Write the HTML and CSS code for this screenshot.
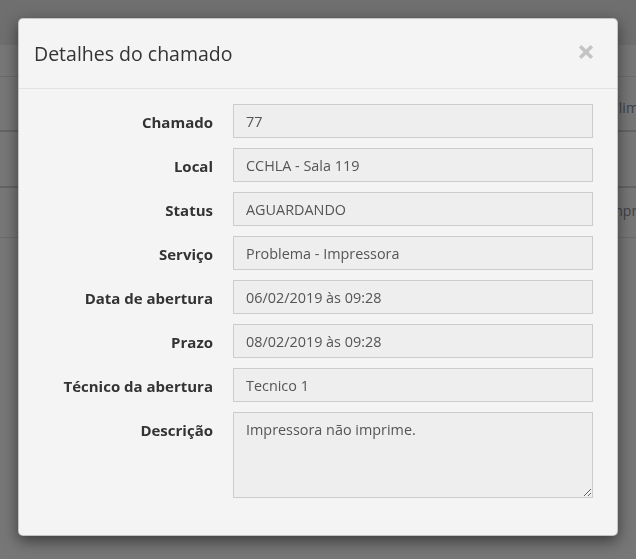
FILE: index.html
```html
<!DOCTYPE html>
<html lang="pt-BR">
<head>
<meta charset="utf-8">
<title>Detalhes do chamado</title>
<link rel="stylesheet" href="styles.css">
</head>
<body>
<div class="page">
  <div class="topbar"></div>
  <div class="row row-thin"><span></span><span></span></div>
  <div class="row row-a"><span></span><span class="cell">Climatização</span></div>
  <div class="row row-b"><span></span><span></span></div>
  <div class="row row-c"><span></span><span class="cell">Impressora</span></div>
</div>

<div class="modal" role="dialog">
  <div class="modal-header">
    <h4 class="modal-title">Detalhes do chamado</h4>
    <button class="close" type="button" aria-label="Fechar">
      <svg width="16" height="16" viewBox="0 0 16 16"><path d="M2.2 2.2 L13.8 13.8 M13.8 2.2 L2.2 13.8" stroke="#c4c4c4" stroke-width="3.6" stroke-linecap="butt" fill="none"/></svg>
    </button>
  </div>
  <div class="modal-body">
    <form class="form">
      <label class="lbl">Chamado</label>
      <input class="ctrl" type="text" value="77" readonly>
      <label class="lbl">Local</label>
      <input class="ctrl" type="text" value="CCHLA - Sala 119" readonly>
      <label class="lbl">Status</label>
      <input class="ctrl" type="text" value="AGUARDANDO" readonly>
      <label class="lbl">Serviço</label>
      <input class="ctrl" type="text" value="Problema - Impressora" readonly>
      <label class="lbl">Data de abertura</label>
      <input class="ctrl" type="text" value="06/02/2019 às 09:28" readonly>
      <label class="lbl">Prazo</label>
      <input class="ctrl" type="text" value="08/02/2019 às 09:28" readonly>
      <label class="lbl">Técnico da abertura</label>
      <input class="ctrl" type="text" value="Tecnico 1" readonly>
      <label class="lbl">Descrição</label>
      <textarea class="ctrl area" readonly>Impressora não imprime.</textarea>
    </form>
  </div>
</div>
</body>
</html>
```

FILE: styles.css
```css
* { box-sizing: border-box; }

html, body {
  margin: 0;
  padding: 0;
  height: 100%;
}

body {
  background: #777777;
  font-family: "Open Sans", "Liberation Sans", sans-serif;
  font-size: 14px;
  line-height: 20px;
  color: #333;
  overflow: hidden;
}

/* dimmed page behind the modal */
.page {
  display: flex;
  flex-direction: column;
}

.topbar {
  height: 45px;
  background: #6f6f6f;
}

.row {
  display: grid;
  grid-template-columns: 610px 1fr;
  align-items: center;
  color: #3e424b;
  white-space: nowrap;
  overflow: hidden;
}

.row-thin { height: 32px; border-bottom: 1px solid #6b6b6b; }
.row-a { height: 55px; border-bottom: 2px solid #646464; padding-top: 8px; }
.row-b { height: 56px; border-bottom: 2px solid #646464; }
.row-c { height: 50px; border-bottom: 1px solid #6b6b6b; padding-bottom: 4px; grid-template-columns: 606px 1fr; }

/* modal */
.modal {
  position: fixed;
  left: 18px;
  top: 18px;
  width: 600px;
  background: #f4f4f4;
  border: 1px solid rgba(0, 0, 0, 0.2);
  border-radius: 5px;
  box-shadow: 0 5px 15px rgba(0, 0, 0, 0.5);
}

.modal-header {
  display: flex;
  justify-content: space-between;
  align-items: flex-start;
  padding: 21px 15px 20px 15px;
  border-bottom: 1px solid #e2e2e2;
}

.modal-title {
  margin: 0;
  font-size: 19.5px;
  line-height: 28px;
  font-weight: 400;
  color: #333;
}

.close {
  margin: 4px 8px 0 0;
  padding: 0;
  width: 16px;
  height: 16px;
  border: 0;
  background: transparent;
  display: flex;
}

.modal-body {
  padding: 15px 24px 37px 14px;
}

.form {
  display: grid;
  grid-template-columns: 180px 1fr;
  column-gap: 20px;
  row-gap: 10px;
  margin: 0;
}

.lbl {
  text-align: right;
  font-size: 15px;
  font-weight: 700;
  padding-top: 8px;
  line-height: 20px;
  color: #333;
  white-space: nowrap;
}

.ctrl {
  display: block;
  width: 100%;
  height: 34px;
  padding: 6px 12px;
  font-family: "Open Sans", "Liberation Sans", sans-serif;
  font-size: 14.4px;
  line-height: 20px;
  color: #555;
  background: #eeeeee;
  border: 1px solid #cccccc;
  border-radius: 0;
  outline: none;
  margin: 0;
}

.area {
  height: 86px;
  padding-top: 7px;
  resize: vertical;
}
```
